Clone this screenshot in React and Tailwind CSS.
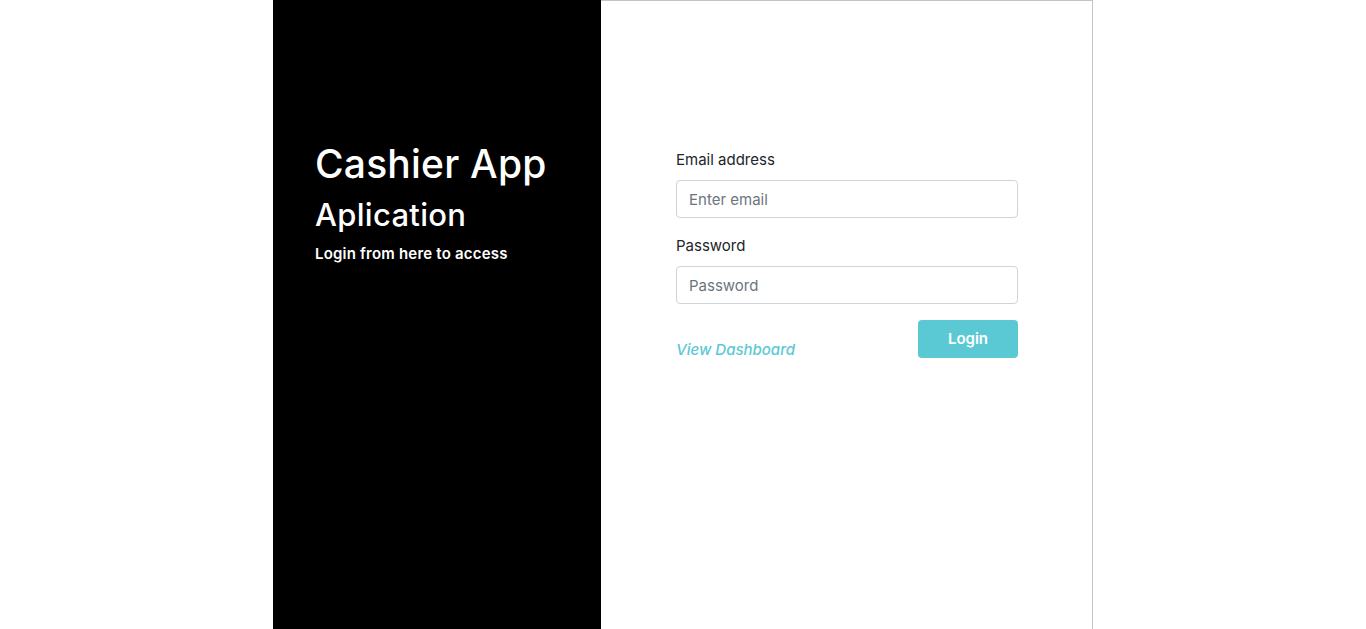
export default function App() {
  return (
    <div
      className="min-h-screen h-[629px] w-full bg-white flex justify-center overflow-hidden"
      style={{ fontFamily: 'Inter, "Noto Sans", sans-serif' }}
    >
      <div className="w-[820px] h-full flex">
        {/* Left brand panel */}
        <div className="w-[328px] h-full bg-black text-white pl-[42px] pt-[141px]">
          <h1 className="text-[39px] leading-[46px] font-medium tracking-[0.2px]">Cashier App</h1>
          <h2 className="text-[31px] leading-[40px] font-medium tracking-[0.3px] mt-[8px]">Aplication</h2>
          <p className="text-[15px] leading-[20px] font-semibold tracking-[0.2px] mt-[9px]">Login from here to access</p>
        </div>

        {/* Right form panel */}
        <div className="flex-1 h-full border-t border-r border-[#c4c4c4] pl-[75px] pr-[74px] pt-[149px]">
          <form className="flex flex-col" onSubmit={(e) => e.preventDefault()}>
            <label className="text-[15px] leading-[20px] text-[#212529]">Email address</label>
            <input
              type="email"
              placeholder="Enter email"
              className="mt-[10px] h-[38px] w-full rounded-[4px] border border-[#ced4da] px-3 text-[15px] text-[#495057] placeholder:text-[#6c757d] outline-none"
            />
            <label className="mt-[18px] text-[15px] leading-[20px] text-[#212529]">Password</label>
            <input
              type="password"
              placeholder="Password"
              className="mt-[10px] h-[38px] w-full rounded-[4px] border border-[#ced4da] px-3 text-[15px] text-[#495057] placeholder:text-[#6c757d] outline-none"
            />
            <div className="mt-[16px] flex items-start justify-between">
              <a href="#" className="mt-[21px] text-[15px] leading-[18px] italic font-medium text-[#5bc9d4]">
                View Dashboard
              </a>
              <button
                type="submit"
                className="h-[38px] w-[100px] rounded-[4px] bg-[#5bc9d4] text-white text-[15px] font-semibold"
              >
                Login
              </button>
            </div>
          </form>
        </div>
      </div>
    </div>
  );
}
